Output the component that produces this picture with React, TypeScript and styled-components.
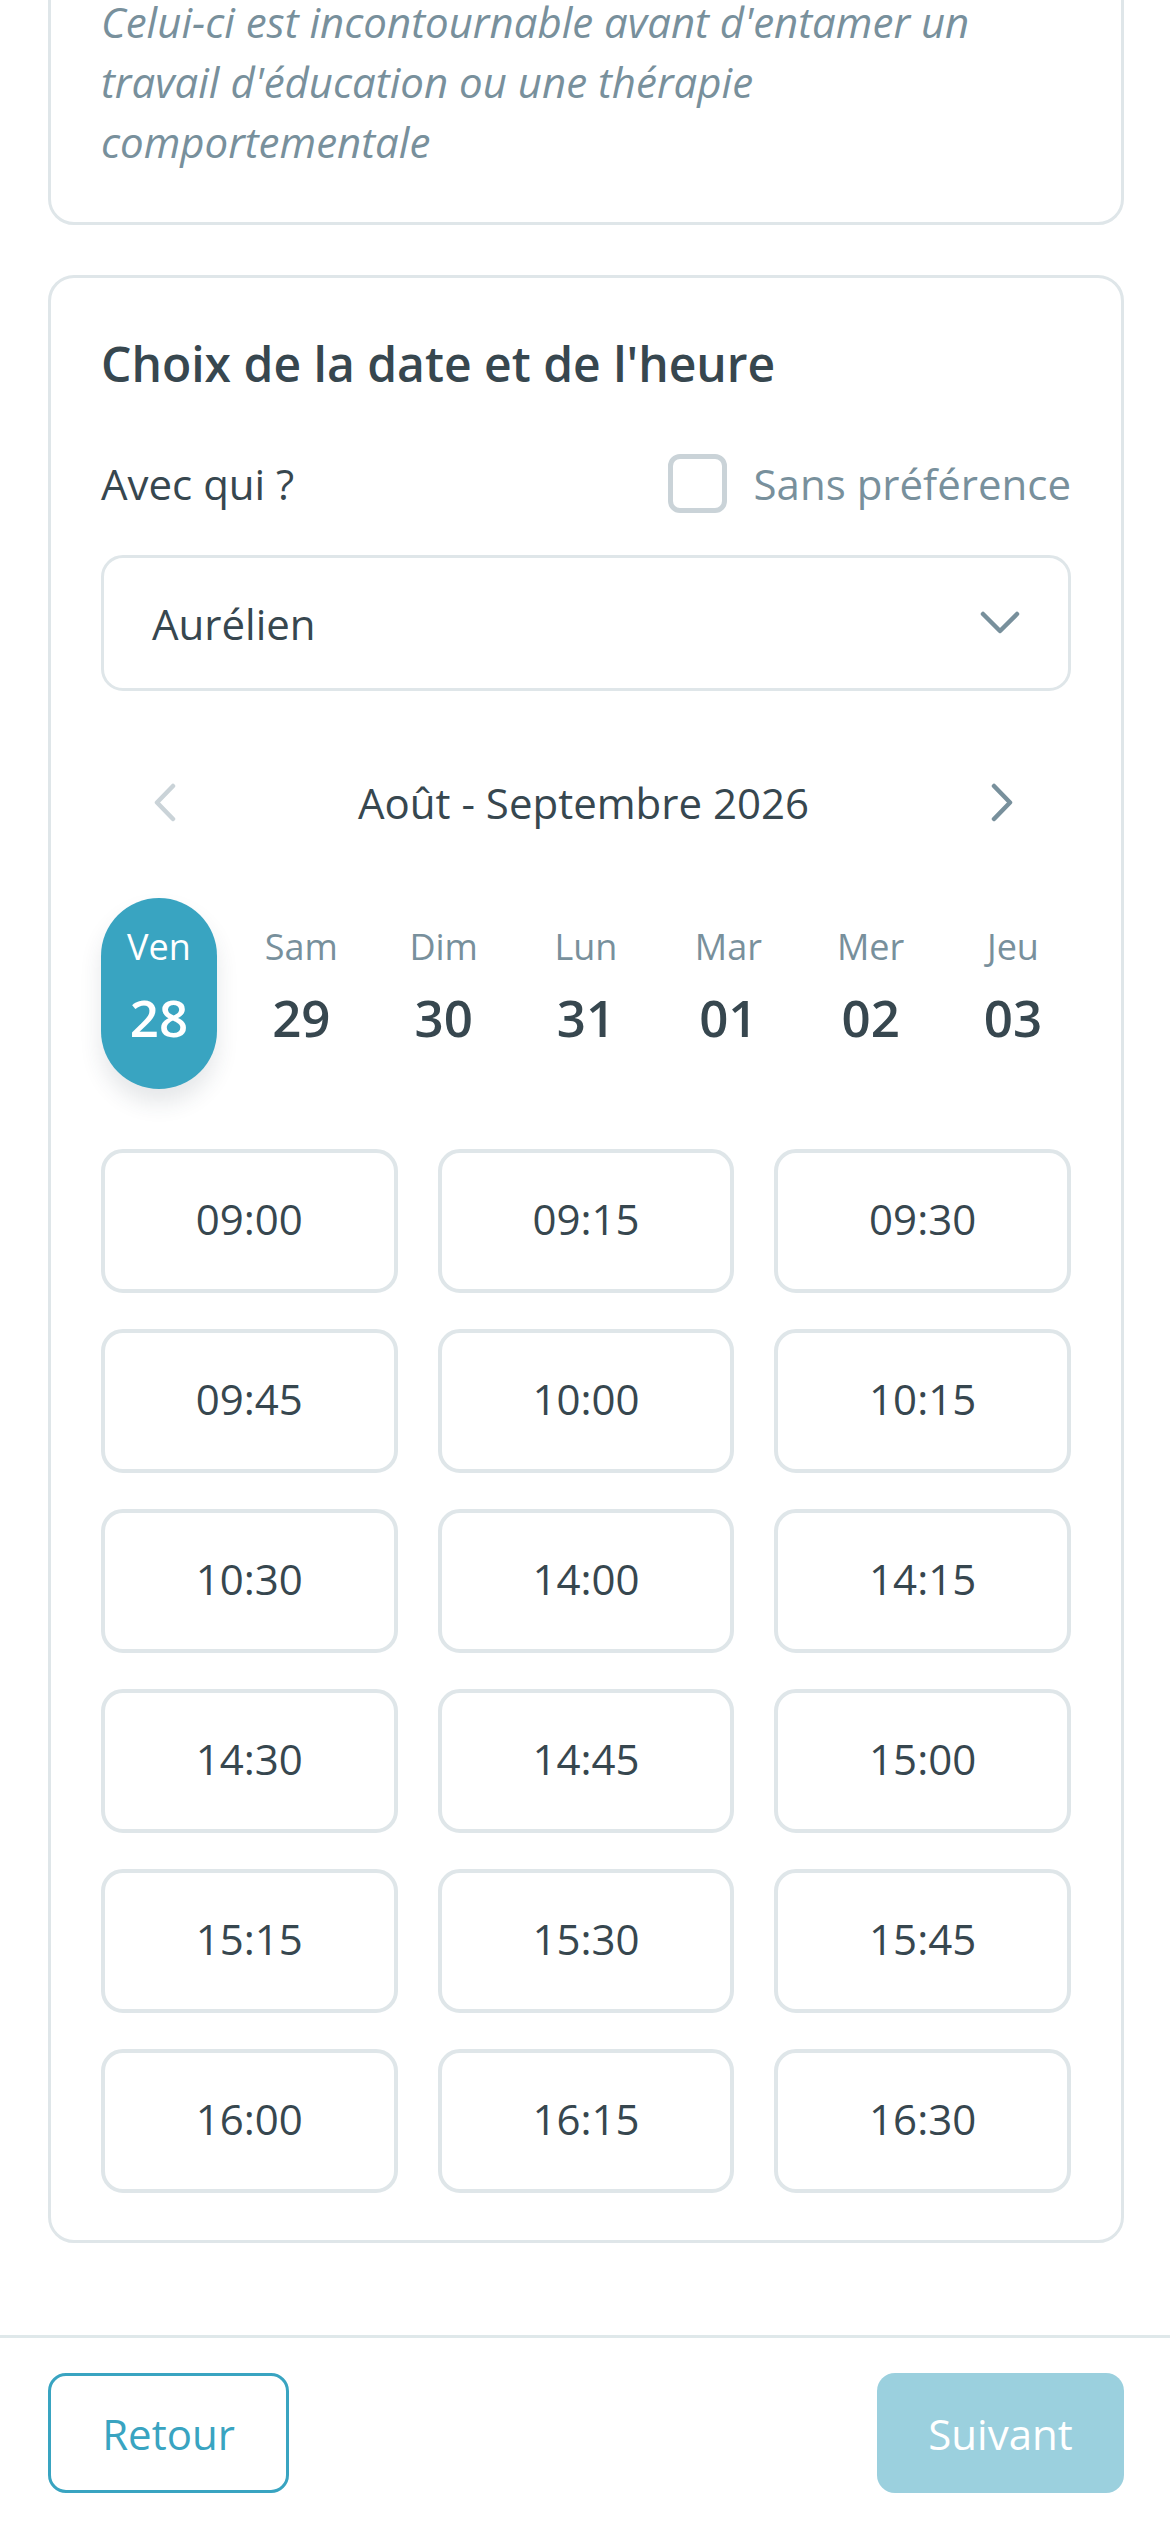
import React from "react";
import styled, { createGlobalStyle } from "styled-components";

const Global = createGlobalStyle`
  html, body { margin: 0; padding: 0; background: #ffffff; }
  body { font-family: "Open Sans", "Noto Sans", sans-serif; color: #37474f; overflow: hidden; }
  * { box-sizing: border-box; }
`;

const Page = styled.div`
  width: 1170px;
  height: 2532px;
  overflow: hidden;
  display: flex;
  flex-direction: column;
`;

const Content = styled.div`
  padding: 0 46px 0 48px;
  display: flex;
  flex-direction: column;
  gap: 50px;
`;

const Card = styled.section<{ $first?: boolean }>`
  border: 3px solid #dfe6e9;
  border-radius: 26px;
  padding: ${(p) => (p.$first ? "50px" : "55px 50px 47px")};
  background: #fff;
  margin-top: ${(p) => (p.$first ? "-61px" : "0")};
`;

const Description = styled.p`
  margin: 0;
  font-style: italic;
  font-size: 42px;
  line-height: 60px;
  color: #78909c;
`;

const Title = styled.h2`
  margin: 0;
  font-size: 48px;
  line-height: 62px;
  font-weight: 600;
  color: #37474f;
`;

const WithRow = styled.div`
  margin-top: 59px;
  display: flex;
  align-items: center;
  justify-content: space-between;
  height: 59px;
`;

const Label = styled.span`
  font-size: 42px;
  line-height: 57px;
  font-weight: 500;
  color: #37474f;
`;

const CheckLabel = styled.label`
  display: flex;
  align-items: center;
  gap: 27px;
  font-size: 42px;
  line-height: 57px;
  color: #78909c;
`;

const Box = styled.span`
  width: 59px;
  height: 59px;
  border: 5px solid #cad3d8;
  border-radius: 12px;
  background: #fff;
`;

const Select = styled.div`
  margin-top: 42px;
  height: 136px;
  border: 3px solid #dfe6e9;
  border-radius: 22px;
  display: flex;
  align-items: center;
  justify-content: space-between;
  padding: 0 48px 0 48px;
  font-size: 42px;
  color: #37474f;
`;

const Nav = styled.div`
  margin-top: 83px;
  height: 57px;
  display: flex;
  align-items: center;
  justify-content: space-between;
  padding: 0 45px 0 40px;
`;

const NavButton = styled.span`
  width: 48px;
  height: 57px;
  display: flex;
  align-items: center;
  justify-content: center;
`;

const Month = styled.span`
  font-size: 42px;
  line-height: 57px;
  font-weight: 500;
  color: #37474f;
`;

const Days = styled.div`
  margin-top: 67px;
  display: flex;
  justify-content: space-between;
`;

const Day = styled.div<{ $active?: boolean }>`
  width: 116px;
  height: 191px;
  border-radius: 58px;
  padding-top: 27px;
  display: flex;
  flex-direction: column;
  align-items: center;
  gap: 18px;
  background: ${(p) => (p.$active ? "#39a4c1" : "transparent")};
  box-shadow: ${(p) => (p.$active ? "0 14px 22px rgba(40, 60, 70, 0.12)" : "none")};
`;

const DayName = styled.span<{ $active?: boolean }>`
  font-size: 36px;
  line-height: 44px;
  color: ${(p) => (p.$active ? "#ffffff" : "#78909c")};
`;

const DayNum = styled.span<{ $active?: boolean }>`
  font-size: 51px;
  line-height: 60px;
  font-weight: 600;
  color: ${(p) => (p.$active ? "#ffffff" : "#37474f")};
`;

const Slots = styled.div`
  margin-top: 60px;
  display: grid;
  grid-template-columns: repeat(3, 1fr);
  column-gap: 40px;
  row-gap: 36px;
`;

const Slot = styled.button`
  height: 144px;
  border: 4px solid #dfe6e9;
  border-radius: 22px;
  background: #fff;
  font-family: inherit;
  font-size: 42px;
  color: #37474f;
  padding: 0 0 5px;
`;

const Footer = styled.footer`
  margin-top: 92px;
  border-top: 3px solid #dfe8ea;
  padding: 35px 46px 36px 48px;
  display: flex;
  justify-content: space-between;
`;

const BackButton = styled.button`
  width: 241px;
  height: 120px;
  border: 3px solid #39a4c1;
  border-radius: 18px;
  background: #fff;
  color: #39a4c1;
  font-family: inherit;
  font-size: 42px;
  font-weight: 500;
`;

const NextButton = styled.button`
  width: 247px;
  height: 120px;
  border: none;
  border-radius: 18px;
  background: #9bd0de;
  color: #fff;
  font-family: inherit;
  font-size: 42px;
  font-weight: 500;
`;

const Chevron = ({ dir, color }: { dir: "left" | "right" | "down"; color: string }) => {
  if (dir === "down") {
    return (
      <svg width="40" height="24" viewBox="0 0 40 24" fill="none">
        <polyline points="3,3 20,20 37,3" stroke={color} strokeWidth="4.5" strokeLinecap="round" strokeLinejoin="round" />
      </svg>
    );
  }
  const pts = dir === "left" ? "19,3 3,19.5 19,36" : "3,3 19,19.5 3,36";
  return (
    <svg width="22" height="39" viewBox="0 0 22 39" fill="none">
      <polyline points={pts} stroke={color} strokeWidth="4.5" strokeLinecap="round" strokeLinejoin="round" />
    </svg>
  );
};

const days = [
  ["Ven", "28"],
  ["Sam", "29"],
  ["Dim", "30"],
  ["Lun", "31"],
  ["Mar", "01"],
  ["Mer", "02"],
  ["Jeu", "03"],
];

const times = [
  "09:00", "09:15", "09:30",
  "09:45", "10:00", "10:15",
  "10:30", "14:00", "14:15",
  "14:30", "14:45", "15:00",
  "15:15", "15:30", "15:45",
  "16:00", "16:15", "16:30",
];

export default function App() {
  return (
    <Page>
      <Global />
      <Content>
        <Card $first>
          <Description>
            Celui-ci est incontournable avant d'entamer un travail d'éducation ou une thérapie comportementale
          </Description>
        </Card>
        <Card>
          <Title>Choix de la date et de l'heure</Title>
          <WithRow>
            <Label>Avec qui ?</Label>
            <CheckLabel>
              <Box />
              Sans préférence
            </CheckLabel>
          </WithRow>
          <Select>
            <span>Aurélien</span>
            <Chevron dir="down" color="#78909c" />
          </Select>
          <Nav>
            <NavButton>
              <Chevron dir="left" color="#cad3d8" />
            </NavButton>
            <Month>Août - Septembre 2026</Month>
            <NavButton>
              <Chevron dir="right" color="#78909c" />
            </NavButton>
          </Nav>
          <Days>
            {days.map(([name, num], i) => (
              <Day key={num} $active={i === 0}>
                <DayName $active={i === 0}>{name}</DayName>
                <DayNum $active={i === 0}>{num}</DayNum>
              </Day>
            ))}
          </Days>
          <Slots>
            {times.map((t) => (
              <Slot key={t}>{t}</Slot>
            ))}
          </Slots>
        </Card>
      </Content>
      <Footer>
        <BackButton>Retour</BackButton>
        <NextButton>Suivant</NextButton>
      </Footer>
    </Page>
  );
}
